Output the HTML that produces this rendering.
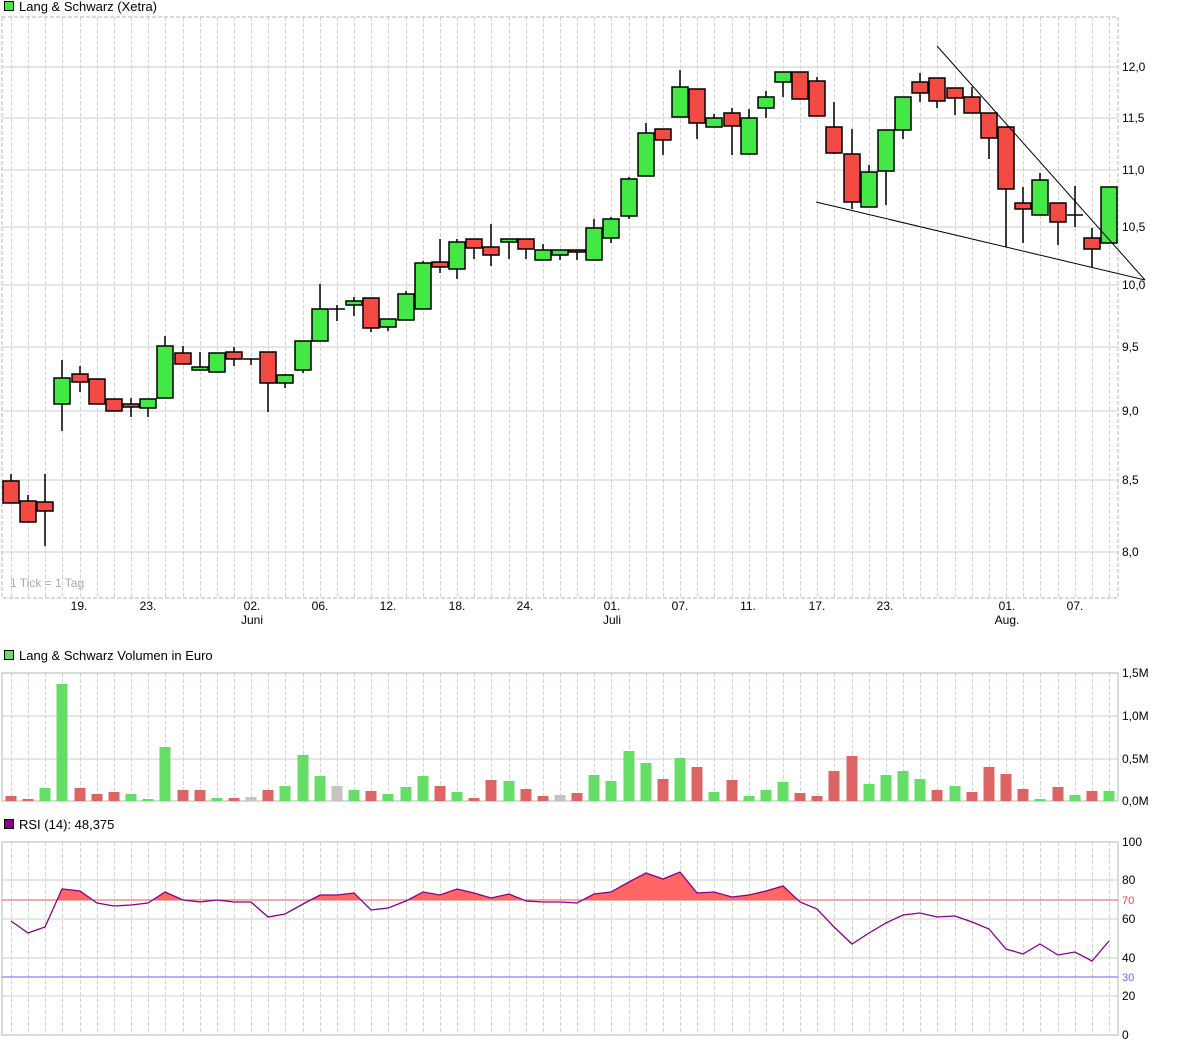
<!DOCTYPE html>
<html><head><meta charset="utf-8"><style>
html,body{margin:0;padding:0;background:#fff;}
svg{display:block;}
text{font-family:"Liberation Sans",sans-serif;font-size:12px;fill:#000;}
.t{font-size:13px;}
.g{stroke:#d2d2d2;stroke-dasharray:4,2;stroke-width:1;}
.h{stroke:#c8d2c8;stroke-width:1;}
.cg{fill:#44e844;stroke:#000;stroke-width:1.5;}
.cr{fill:#f44a44;stroke:#000;stroke-width:1.5;}
.w{stroke:#000;stroke-width:1.5;}
.vg{fill:#66dd66;}.vr{fill:#dd6464;}.vx{fill:#c4c4c4;}
</style></head><body>
<svg id="s" width="1177" height="1050" viewBox="0 0 1177 1050" xmlns="http://www.w3.org/2000/svg">
<rect x="0" y="0" width="1177" height="1050" fill="#fff"/>
<rect x="4.5" y="1.5" width="9" height="9" fill="#44e844" stroke="#000"/>
<text class="t" x="19" y="11">Lang &amp; Schwarz (Xetra)</text>
<rect x="4.5" y="650.5" width="9" height="9" fill="#66dd66" stroke="#000"/>
<text class="t" x="19" y="660">Lang &amp; Schwarz Volumen in Euro</text>
<rect x="4.5" y="819.5" width="9" height="9" fill="#880088" stroke="#000"/>
<text class="t" x="19" y="829">RSI (14): 48,375</text>

<g class="h">
<line x1="2" y1="67" x2="1118" y2="67"/><line x1="2" y1="118" x2="1118" y2="118"/>
<line x1="2" y1="170" x2="1118" y2="170"/><line x1="2" y1="227" x2="1118" y2="227"/>
<line x1="2" y1="285" x2="1118" y2="285"/><line x1="2" y1="347" x2="1118" y2="347"/>
<line x1="2" y1="411" x2="1118" y2="411"/><line x1="2" y1="480" x2="1118" y2="480"/>
<line x1="2" y1="552" x2="1118" y2="552"/>
<line x1="2" y1="716" x2="1118" y2="716"/><line x1="2" y1="759" x2="1118" y2="759"/>
<line x1="2" y1="880" x2="1118" y2="880"/><line x1="2" y1="919" x2="1118" y2="919"/>
<line x1="2" y1="958" x2="1118" y2="958"/><line x1="2" y1="996" x2="1118" y2="996"/>
</g>
<g fill="none" stroke="#c8d2c8" stroke-width="1.5">
<rect x="2" y="17" width="1116" height="581" stroke-dasharray="4,2"/>
<rect x="2" y="673" width="1116" height="128"/>
<rect x="2" y="842" width="1116" height="193"/>
</g>
<g id="vg" class="g"></g>

<g>
<text x="1122" y="71">12,0</text><text x="1122" y="122">11,5</text>
<text x="1122" y="174">11,0</text><text x="1122" y="231">10,5</text>
<text x="1122" y="289">10,0</text><text x="1122" y="351">9,5</text>
<text x="1122" y="415">9,0</text><text x="1122" y="484">8,5</text>
<text x="1122" y="556">8,0</text>
<text x="1122" y="677">1,5M</text><text x="1122" y="720">1,0M</text>
<text x="1122" y="763">0,5M</text><text x="1122" y="805">0,0M</text>
<text x="1122" y="846">100</text><text x="1122" y="884">80</text>
<text x="1122" y="904" style="fill:#ee4444;font-size:11px">70</text>
<text x="1122" y="923">60</text><text x="1122" y="962">40</text>
<text x="1122" y="981" style="fill:#6666ee;font-size:11px">30</text>
<text x="1122" y="1000">20</text><text x="1122" y="1039">0</text>
</g>
<text x="10" y="587" style="fill:#aaa">1 Tick = 1 Tag</text>
<g text-anchor="middle">
<text x="79" y="610">19.</text><text x="148" y="610">23.</text>
<text x="252" y="610">02.</text><text x="252" y="624">Juni</text>
<text x="320" y="610">06.</text><text x="388" y="610">12.</text>
<text x="457" y="610">18.</text><text x="525" y="610">24.</text>
<text x="612" y="610">01.</text><text x="612" y="624">Juli</text>
<text x="680" y="610">07.</text><text x="748" y="610">11.</text>
<text x="817" y="610">17.</text><text x="885" y="610">23.</text>
<text x="1007" y="610">01.</text><text x="1007" y="624">Aug.</text>
<text x="1075" y="610">07.</text>
</g>

<g id="candles"></g>
<g id="vol"></g>
<line x1="2" y1="900" x2="1118" y2="900" stroke="#ee5555" stroke-width="1"/>
<line x1="2" y1="977" x2="1118" y2="977" stroke="#6666ee" stroke-width="1"/>
<g id="rsi"></g>
<line x1="937" y1="46" x2="1145" y2="280" stroke="#000" stroke-width="1"/>
<line x1="816" y1="202" x2="1145" y2="280" stroke="#000" stroke-width="1"/>
</svg>
<script>
var NS="http://www.w3.org/2000/svg";
function el(p,t,a){var e=document.createElementNS(NS,t);for(var k in a)e.setAttribute(k,a[k]);p.appendChild(e);return e;}
var X=[];for(var i=0;i<65;i++)X.push(Math.round(11+17.156*i));
var vg=document.getElementById('vg');
X.forEach(function(x){
 el(vg,'line',{x1:x+.5,y1:17,x2:x+.5,y2:598});
 el(vg,'line',{x1:x+.5,y1:673,x2:x+.5,y2:801});
 el(vg,'line',{x1:x+.5,y1:842,x2:x+.5,y2:1035});
});
var C=[[481,503,474,503,'r'],[501,522,495,522,'r'],[502,511,474,546,'r'],[378,404,360,431,'g'],[374,382,366,392,'r'],
[379,404,379,404,'r'],[399,411,399,411,'r'],[404,407,398,417,'r'],[399,408,399,417,'g'],[346,398,336,398,'g'],
[353,364,346,364,'r'],[367,370,352,370,'g'],[353,372,353,372,'g'],[352,359,347,366,'r'],[359,359,359,365,'d'],
[352,383,352,412,'r'],[375,383,374,388,'g'],[341,370,341,373,'g'],[309,341,284,341,'g'],[309,309,305,321,'d'],
[301,305,297,316,'g'],[298,328,298,332,'r'],[319,327,319,331,'g'],[294,320,291,320,'g'],[263,309,261,309,'g'],
[262,267,239,273,'r'],[242,269,239,279,'g'],[239,248,239,259,'r'],[247,255,224,266,'r'],[239,242,239,259,'g'],
[239,249,239,259,'r'],[250,260,244,260,'g'],[250,255,250,260,'g'],[250,252,250,260,'r'],[228,260,219,260,'g'],
[219,238,217,243,'g'],[179,216,177,219,'g'],[133,176,123,176,'g'],[129,140,129,155,'r'],[87,117,70,117,'g'],
[89,123,89,139,'r'],[118,127,114,127,'g'],[113,126,108,155,'r'],[118,154,109,154,'g'],[97,108,91,118,'g'],
[72,82,72,97,'g'],[72,99,72,100,'r'],[81,116,77,116,'r'],[127,153,102,154,'r'],[154,202,129,209,'r'],
[172,207,165,207,'g'],[130,171,130,205,'g'],[97,130,97,139,'g'],[82,93,73,102,'r'],[78,101,78,108,'r'],
[88,98,88,115,'r'],[97,113,87,113,'r'],[113,138,113,159,'r'],[127,189,127,247,'r'],[203,209,187,243,'r'],
[180,215,173,215,'g'],[203,222,203,245,'r'],[215,215,186,227,'d'],[238,249,228,267,'r'],[187,243,187,243,'g']];
var cg=document.getElementById('candles');
C.forEach(function(c,i){var x=X[i];
 el(cg,'line',{x1:x,y1:c[2],x2:x,y2:c[3],'class':'w'});
 if(c[4]=='d'){el(cg,'line',{x1:x-8,y1:c[0],x2:x+8,y2:c[0],'class':'w'});}
 else el(cg,'rect',{x:x-8,y:c[0],width:16,height:Math.max(c[1]-c[0],2),'class':c[4]=='g'?'cg':'cr'});
});
var V="796r 799r 788g 684g 788r 794r 792r 794g 799g 747g 790r 790r 798g 798r 797x 790r 786g 755g 776g 786x 790g 791r 794g 787g 776g 786r 792g 798r 780r 781g 789r 796r 795x 793r 775g 781g 751g 763g 779r 758g 767r 792g 780r 796g 790g 782g 793r 796r 771r 756r 784g 775g 771g 779g 790r 786g 792r 767r 774r 789r 799g 787r 795g 791r 791g".split(' ');
var vv=document.getElementById('vol');
V.forEach(function(s,i){var t=parseInt(s),c=s.slice(-1);
 el(vv,'rect',{x:X[i]-5.5,y:t,width:11,height:801-t,'class':'v'+c});});
var R=[921,933,927,889,891,903,906,905,903,892,900,902,900,902,902,917,914,904,895,895,893,910,908,901,892,895,889,893,898,894,901,902,902,903,894,892,882,873,879,872,893,892,897,895,891,886,902,909,927,944,933,923,915,913,917,916,922,929,949,954,944,955,952,961,941];
var pts=R.map(function(y,i){return X[i]+','+y;}).join(' ');
var rg=document.getElementById('rsi');
var defs=el(rg,'defs',{});var cp=el(defs,'clipPath',{id:'cp'});el(cp,'rect',{x:0,y:840,width:1120,height:60});
el(rg,'polygon',{points:X[0]+',900 '+pts+' '+X[64]+',900',fill:'#ff6666','clip-path':'url(#cp)'});
el(rg,'polyline',{points:pts,fill:'none',stroke:'#880088','stroke-width':1.3});
</script>
</body></html>
